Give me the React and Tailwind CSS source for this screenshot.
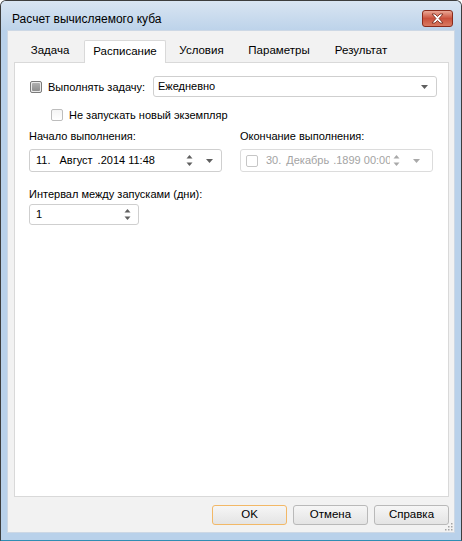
import React from "react";

function SpinArrows({ color = "#5f5f5f" }) {
  return (
    <svg width="7" height="13" viewBox="0 0 7 13" className="block">
      <path d="M3.5 1 L6.5 4.5 L0.5 4.5 Z" fill={color} />
      <path d="M0.5 8.5 L6.5 8.5 L3.5 12 Z" fill={color} />
    </svg>
  );
}

function DropArrow({ color = "#5f5f5f" }) {
  return (
    <svg width="7" height="4" viewBox="0 0 7 4" className="block">
      <path d="M0 0 L7 0 L3.5 4 Z" fill={color} />
    </svg>
  );
}

function Tab({ w, active, children }) {
  if (active) {
    return (
      <div
        className={`${w} h-[23px] -mb-[1px] relative z-10 bg-white border border-b-0 border-[#d9d9d9] rounded-t-[2px] flex items-center justify-center text-[11.5px] text-black`}
      >
        {children}
      </div>
    );
  }
  return (
    <div className={`${w} h-[22px] flex items-center justify-center text-[11.5px] text-black`}>
      {children}
    </div>
  );
}

function Btn({ children, def }) {
  return (
    <div
      className={`w-[75px] h-[20px] rounded-[3px] border ${
        def ? "border-[#f2b867]" : "border-[#b9b9b9]"
      } bg-gradient-to-b from-[#f6f6f6] to-[#e4e4e4] flex items-center justify-center text-[11.5px] text-black`}
    >
      {children}
    </div>
  );
}

export default function App() {
  return (
    <div className="w-[462px] h-[541px] flex flex-col bg-[#b9d1ea] border border-[#3d3d3d] border-b-[#2f8db3] rounded-t-[6px] overflow-hidden font-['Liberation_Sans',Arial,sans-serif] relative">
      {/* title bar */}
      <div className="h-[29px] shrink-0 flex items-start justify-between pl-[11px] pr-[8px] bg-gradient-to-b from-[#d9e5f2] to-[#bdd3ea]">
        <div className="mt-[10px] leading-[16px] text-[12px] text-black">Расчет вычисляемого куба</div>
        <div className="mt-[9px] w-[31px] h-[17px] rounded-[3px] border border-[#8a2b1c] bg-gradient-to-b from-[#eaa796] via-[#c9503c] to-[#d97a62] flex items-center justify-center">
          <svg width="13" height="11" viewBox="0 0 13 11">
            <path
              d="M1 1 H4 L6.5 3.5 L9 1 H12 L8 5.5 L12 10 H9 L6.5 7.5 L4 10 H1 L5 5.5 Z"
              fill="#ffffff"
              stroke="#6e2418"
              strokeWidth="0.8"
              strokeLinejoin="round"
            />
          </svg>
        </div>
      </div>

      {/* client */}
      <div className="flex-1 mx-[6px] mb-[7px] border border-[#cdd8e5] bg-[#f2f2f2] flex flex-col relative">
        {/* tabs */}
        <div className="pt-[9px] pl-[8px] flex items-end">
          <Tab w="w-[68px]">Задача</Tab>
          <Tab w="w-[82px]" active>
            Расписание
          </Tab>
          <Tab w="w-[71px]">Условия</Tab>
          <Tab w="w-[84px]">Параметры</Tab>
          <Tab w="w-[80px]">Результат</Tab>
        </div>

        {/* panel */}
        <div className="h-[435px] ml-[6px] mr-[5px] bg-white border border-[#d9d9d9] pt-[13px] pl-[14px] text-[11px] text-black">
          {/* row 1 */}
          <div className="w-[408px] h-[21px] flex items-center">
            <div className="ml-[1px] w-[12px] h-[12px] shrink-0 rounded-[2px] border border-[#7a7a7a] bg-[#e9e9e9] p-[1px]">
              <div className="w-full h-full rounded-[1px] bg-gradient-to-b from-[#b0b0b0] to-[#8e8e8e]" />
            </div>
            <div className="ml-[6px] leading-[16px] whitespace-nowrap">Выполнять задачу:</div>
            <div className="ml-auto w-[284px] h-[21px] rounded-[3px] border border-[#cfcfcf] bg-white flex items-center justify-between pl-[4px] pr-[8px]">
              <span>Ежедневно</span>
              <DropArrow />
            </div>
          </div>

          {/* row 2 */}
          <div className="h-[16px] mt-[10px] ml-[22px] flex items-center">
            <div className="w-[12px] h-[12px] rounded-[2px] border border-[#bdbdbd] bg-gradient-to-b from-[#f4f4f4] to-white" />
            <div className="ml-[6px] leading-[16px]">Не запускать новый экземпляр</div>
          </div>

          {/* columns */}
          <div className="flex mt-[5px]">
            <div className="w-[193px]">
              <div className="leading-[16px]">Начало выполнения:</div>
              <div className="mt-[5px] h-[23px] rounded-[3px] border border-[#cfcfcf] bg-white flex items-center pl-[6px] pr-[8px]">
                <div className="flex-1 flex whitespace-nowrap">
                  <span>11.</span>
                  <span className="ml-[9px]">Август</span>
                  <span className="ml-[5px]">.2014 11:48</span>
                </div>
                <SpinArrows />
                <div className="ml-[13px]">
                  <DropArrow />
                </div>
              </div>
              <div className="mt-[14px] leading-[16px] whitespace-nowrap">Интервал между запусками (дни):</div>
              <div className="mt-[2px] w-[110px] h-[21px] rounded-[3px] border border-[#cfcfcf] bg-white flex items-center pl-[6px] pr-[7px]">
                <span className="flex-1">1</span>
                <SpinArrows />
              </div>
            </div>
            <div className="w-[193px] ml-[18px]">
              <div className="leading-[16px]">Окончание выполнения:</div>
              <div className="mt-[5px] h-[23px] rounded-[3px] border border-[#dcdcdc] bg-white flex items-center pl-[5px] pr-[8px]">
                <div className="w-[12px] h-[12px] shrink-0 rounded-[2px] border border-[#c6c6c6] bg-white" />
                <div className="ml-[8px] w-[124px] overflow-hidden flex whitespace-nowrap text-[#a3a3a3]">
                  <span>30.</span>
                  <span className="ml-[5px]">Декабрь</span>
                  <span className="ml-[4px]">.1899 00:00</span>
                </div>
                <div className="ml-[3px]">
                  <SpinArrows color="#a9a9a9" />
                </div>
                <div className="ml-[13px]">
                  <DropArrow color="#a9a9a9" />
                </div>
              </div>
            </div>
          </div>
        </div>

        {/* buttons */}
        <div className="mt-[8px] flex justify-end gap-[6px] pr-[5px]">
          <Btn def>OK</Btn>
          <Btn>Отмена</Btn>
          <Btn>Справка</Btn>
        </div>

        {/* resize grip */}
        <svg width="9" height="9" viewBox="0 0 9 9" className="absolute right-[1px] bottom-[1px]">
          {[
            [7, 1],
            [7, 4],
            [4, 4],
            [7, 7],
            [4, 7],
            [1, 7],
          ].map(([x, y], i) => (
            <rect key={i} x={x} y={y} width="1.5" height="1.5" fill="#a3a3a3" />
          ))}
        </svg>
      </div>
    </div>
  );
}
